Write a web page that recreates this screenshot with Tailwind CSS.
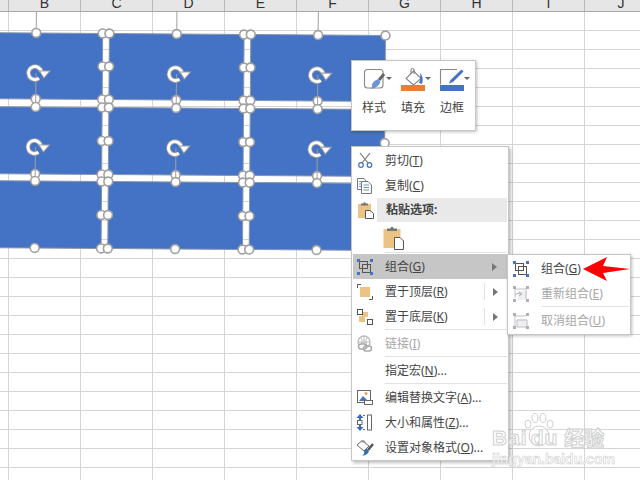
<!DOCTYPE html>
<html lang="zh">
<head>
  <meta charset="UTF-8">
  <title>组合</title>
  <script src="https://cdn.jsdelivr.net/npm/@tailwindcss/browser@4"></script>
</head>
<body class="bg-white">
  <div class="relative w-[640px] h-[480px] overflow-hidden font-['Noto_Sans','Noto_Sans_CJK_SC',sans-serif] text-[12px] text-[#444]">

    <!-- column header -->
    <div class="relative z-10 flex h-[12px] bg-[#e6e6e6] border-b border-[#a6a6a6] overflow-hidden font-['Liberation_Sans',sans-serif] text-[14px] leading-[12px] text-[#333]">
      <div class="w-[9px] shrink-0 border-r border-[#b8b8b8]"></div>
      <div class="w-[72px] shrink-0 border-r border-[#b8b8b8] text-center -mt-[3px]">B</div>
      <div class="w-[72px] shrink-0 border-r border-[#b8b8b8] text-center -mt-[3px]">C</div>
      <div class="w-[72px] shrink-0 border-r border-[#b8b8b8] text-center -mt-[3px]">D</div>
      <div class="w-[72px] shrink-0 border-r border-[#b8b8b8] text-center -mt-[3px]">E</div>
      <div class="w-[72px] shrink-0 border-r border-[#b8b8b8] text-center -mt-[3px]">F</div>
      <div class="w-[72px] shrink-0 border-r border-[#b8b8b8] text-center -mt-[3px]">G</div>
      <div class="w-[72px] shrink-0 border-r border-[#b8b8b8] text-center -mt-[3px]">H</div>
      <div class="w-[72px] shrink-0 border-r border-[#b8b8b8] text-center -mt-[3px]">I</div>
      <div class="w-[72px] shrink-0 text-center -mt-[3px]">J</div>
    </div>

    <!-- cells -->
    <div class="h-[468px] [background-image:linear-gradient(#d4d4d4_1px,transparent_1px),linear-gradient(90deg,#d4d4d4_1px,transparent_1px)] [background-size:72px_19px] [background-position:8px_18px]"></div>

    <!-- selected shapes -->
    <svg id="shapes" class="absolute left-0 top-0" width="640" height="480" viewBox="0 0 640 480"></svg>

    <!-- mini toolbar -->
    <div class="absolute left-[351px] top-[60px] w-[125px] h-[71px] bg-white border border-[#c6c6c6] shadow-[1px_1px_3px_rgba(0,0,0,0.25)] flex px-[3px] pt-[7px]">
      <div class="w-[39px] flex flex-col items-center">
        <svg width="39" height="24" viewBox="0 0 39 24">
          <rect x="9.5" y="1.5" width="18.5" height="18.5" rx="3" fill="#fff" stroke="#888" stroke-width="1.1"/>
          <path d="M29 6 L24 12" stroke="#666" stroke-width="3"/>
          <path d="M23 11 L25.500 14 Q23 20 15 21 Q18 19 17 16 Q19 12.500 23 11Z" fill="#6b93d6"/>
          <path d="M31 9h6l-3 3z" fill="#666"/>
        </svg>
        <div class="mt-[8px] leading-[16px] -ml-px">样式</div>
      </div>
      <div class="w-[39px] flex flex-col items-center">
        <svg width="39" height="24" viewBox="0 0 39 24">
          <path d="M19.5 3 L27 10.5 L19.5 17 L12 10.5Z" fill="#fff" stroke="#888" stroke-width="1.1"/>
          <path d="M17 6 V2 a1.5 1.5 0 0 1 3 0 V6" fill="none" stroke="#777"/>
          <path d="M26 5 Q30 9 28 16 L25 15 Q27 11 26 5Z" fill="#4472c4"/>
          <rect x="7" y="17" width="24" height="6" fill="#ed7d31"/>
          <path d="M31 9h6l-3 3z" fill="#666"/>
        </svg>
        <div class="mt-[8px] leading-[16px] -ml-px">填充</div>
      </div>
      <div class="w-[39px] flex flex-col items-center">
        <svg width="39" height="24" viewBox="0 0 39 24">
          <path d="M24 1.5 H7.5 V16.5" fill="none" stroke="#888" stroke-width="1.1"/>
          <path d="M28.500 1.500 L30.500 3.500 L20 14 L16 15.500 L17.500 12Z" fill="#4472c4"/>
          <rect x="7" y="17" width="24" height="6" fill="#4472c4"/>
          <path d="M31 9h6l-3 3z" fill="#666"/>
        </svg>
        <div class="mt-[8px] leading-[16px] -ml-px">边框</div>
      </div>
    </div>

    <!-- context menu -->
    <div class="absolute left-[351px] top-[146px] w-[158px] bg-white border border-[#c6c6c6] shadow-[2px_2px_3px_rgba(0,0,0,0.25)] pt-px flex flex-col">
      <div class="flex items-center h-[25px]">
        <svg class="ml-[4px] mr-[11px] shrink-0" width="18" height="18" viewBox="0 0 18 18">
          <path d="M4 1 L12 11 M14 1 L6 11" stroke="#777" stroke-width="1.2" fill="none"/>
          <circle cx="5" cy="13" r="2.3" fill="none" stroke="#4472c4" stroke-width="1.2"/>
          <circle cx="13.5" cy="13" r="2.3" fill="none" stroke="#4472c4" stroke-width="1.2"/>
        </svg>
        <span>剪切(<span class="underline">T</span>)</span>
      </div>
      <div class="flex items-center h-[25px]">
        <svg class="ml-[4px] mr-[11px] shrink-0" width="18" height="18" viewBox="0 0 18 18">
          <path d="M5.500 12.500 H1.500 V1.500 H8 L10 4" fill="#fff" stroke="#777"/>
          <path d="M5.500 4.500 H12 L15.500 8 V16.500 H5.500Z" fill="#fff" stroke="#777"/>
          <path d="M3 4.500H5M3 7H5M3 9.500H5M7.500 8H13M7.500 10.500H13M7.500 13H13" stroke="#6b93d6"/>
        </svg>
        <span>复制(<span class="underline">C</span>)</span>
      </div>
      <div class="flex h-[24px]">
        <div class="w-[25px] shrink-0 flex items-center">
          <svg class="ml-[5px]" width="18" height="18" viewBox="0 0 18 18">
            <rect x="1" y="3" width="13" height="14" fill="#ebc385"/>
            <path d="M4 4.500 V2.500 H6 Q7.500 0 9 2.500 H11 V4.500Z" fill="#777"/>
            <path d="M8.500 9.500 H13 L16.500 12.500 V17.500 H8.500Z" fill="#fff" stroke="#555"/>
          </svg>
        </div>
        <div class="flex-1 mr-px bg-[#e9e9e9] pl-[9px] font-bold leading-[24px]">粘贴选项:</div>
      </div>
      <div class="flex h-[30px] items-start pt-[4px] pl-[31px]">
        <svg width="22" height="24" viewBox="0 0 22 24">
          <rect x="0.500" y="3" width="17" height="19" fill="#ebc385"/>
          <path d="M4 5 V2.500 H7 Q9 -1 11 2.500 H14 V5Z" fill="#777"/>
          <path d="M11.500 11.500 H17 L20.500 15 V23.500 H11.500Z" fill="#fff" stroke="#555"/>
        </svg>
      </div>
      <div class="h-[2px] ml-[33px] mr-px bg-[#e3e3e3] [background-clip:content-box] pb-px"></div>
      <div class="flex items-center h-[25px] ml-px mr-px bg-[#c6c6c6]">
        <svg class="ml-[3px] mr-[11px] shrink-0" width="18" height="18" viewBox="0 0 18 18">
          <rect x="3.500" y="3.500" width="8" height="7" fill="none" stroke="#555"/>
          <rect x="6.500" y="6.500" width="8" height="8" fill="none" stroke="#555"/>
          <path d="M1 1h3v3h-3zM14 1h3v3h-3zM1 14h3v3h-3zM14 14h3v3h-3z" fill="#4472c4"/>
        </svg>
        <span>组合(<span class="underline">G</span>)</span>
        <span class="ml-auto mr-[10px] w-0 h-0 border-y-[4px] border-y-transparent border-l-[5px] border-l-[#777]"></span>
      </div>
      <div class="flex items-center h-[25px]">
        <svg class="ml-[4px] mr-[11px] shrink-0" width="18" height="18" viewBox="0 0 18 18">
          <rect x="4" y="4" width="10" height="10" fill="#ebc385"/>
          <path d="M5 1.500H1.500V5M13 16.500H16.500V13" fill="none" stroke="#555"/>
        </svg>
        <span>置于顶层(<span class="underline">R</span>)</span>
        <span class="ml-auto h-[17px] border-l border-[#e3e3e3]"></span>
        <span class="ml-[8px] mr-[10px] w-0 h-0 border-y-[4px] border-y-transparent border-l-[5px] border-l-[#777]"></span>
      </div>
      <div class="flex items-center h-[25px]">
        <svg class="ml-[4px] mr-[11px] shrink-0" width="18" height="18" viewBox="0 0 18 18">
          <rect x="6" y="4" width="6" height="5" fill="#ebc385"/>
          <rect x="3" y="8" width="6" height="6" fill="#ebc385"/>
          <rect x="1.500" y="1.500" width="5" height="5" fill="#fff" stroke="#555"/>
          <rect x="11.500" y="11.500" width="5" height="5" fill="#fff" stroke="#555"/>
        </svg>
        <span>置于底层(<span class="underline">K</span>)</span>
        <span class="ml-auto h-[17px] border-l border-[#e3e3e3]"></span>
        <span class="ml-[8px] mr-[10px] w-0 h-0 border-y-[4px] border-y-transparent border-l-[5px] border-l-[#777]"></span>
      </div>
      <div class="h-[2px] ml-[33px] mr-px bg-[#e3e3e3] [background-clip:content-box] pb-px"></div>
      <div class="flex items-center h-[25px] text-[#a6a6a6]">
        <svg class="ml-[4px] mr-[11px] shrink-0" width="18" height="18" viewBox="0 0 18 18">
          <circle cx="8" cy="7" r="6" fill="none" stroke="#bbb" stroke-width="1.300"/>
          <path d="M2 7H14M8 1V13M4.500 2.500Q8 6 4.500 11.500M11.500 2.500Q8 6 11.500 11.500" fill="none" stroke="#bbb"/>
          <rect x="2.500" y="9" width="8" height="5" rx="2.500" fill="#fff" stroke="#aaa" stroke-width="1.500"/>
          <rect x="7.500" y="11" width="8" height="5" rx="2.500" fill="none" stroke="#aaa" stroke-width="1.500"/>
        </svg>
        <span>链接(<span class="underline">I</span>)</span>
      </div>
      <div class="h-[2px] ml-[33px] mr-px bg-[#e3e3e3] [background-clip:content-box] pb-px"></div>
      <div class="flex items-center h-[25px] pl-[33px]">
        <span>指定宏(<span class="underline">N</span>)...</span>
      </div>
      <div class="h-[2px] ml-[33px] mr-px bg-[#e3e3e3] [background-clip:content-box] pb-px"></div>
      <div class="flex items-center h-[25px]">
        <svg class="ml-[4px] mr-[11px] shrink-0" width="18" height="18" viewBox="0 0 18 18">
          <rect x="1.500" y="1.500" width="13" height="12" fill="#fff" stroke="#666"/>
          <path d="M3 12 L7 7 L10 10 L12 12Z" fill="#4472c4"/>
          <circle cx="10" cy="4.500" r="1.500" fill="#ed9d5d"/>
          <rect x="8.500" y="11.500" width="8" height="4" fill="#fff" stroke="#666"/>
        </svg>
        <span>编辑替换文字(<span class="underline">A</span>)...</span>
      </div>
      <div class="flex items-center h-[25px]">
        <svg class="ml-[4px] mr-[11px] shrink-0" width="18" height="18" viewBox="0 0 18 18">
          <path d="M4 0 L7.500 4H5V6H3V4H0.500Z" fill="#2f6db5"/>
          <path d="M4 17 L7.500 13H5V11H3V13H0.500Z" fill="#2f6db5"/>
          <rect x="1.500" y="6.500" width="4.500" height="4" fill="none" stroke="#666"/>
          <path d="M7 1.500H9M7 15.500H9" stroke="#666"/>
          <rect x="11.500" y="1" width="4" height="15" fill="#fff" stroke="#666"/>
        </svg>
        <span>大小和属性(<span class="underline">Z</span>)...</span>
      </div>
      <div class="flex items-center h-[25px]">
        <svg class="ml-[4px] mr-[11px] shrink-0" width="18" height="18" viewBox="0 0 18 18">
          <path d="M1 6 L6 1.500 L13 7 L8 12Z" fill="#fff" stroke="#666"/>
          <path d="M4 3 L8 1 L10 4" fill="#999"/>
          <path d="M17 5 L12 11" stroke="#555" stroke-width="2.500"/>
          <path d="M10.500 9.500 L13 12 Q12 16 6 17 Q9 15 8 12 Q9 10 10.500 9.500Z" fill="#2f6db5"/>
        </svg>
        <span>设置对象格式(<span class="underline">O</span>)...</span>
      </div>
    </div>

    <!-- group submenu -->
    <div class="absolute left-[507px] top-[254px] w-[124px] h-[81px] bg-white border border-[#c6c6c6] shadow-[1px_1px_3px_rgba(0,0,0,0.25)] pt-px flex flex-col">
      <div class="flex items-center h-[25px]">
        <svg class="ml-[4px] mr-[11px] shrink-0" width="18" height="18" viewBox="0 0 18 18">
          <rect x="3.500" y="3.500" width="8" height="7" fill="none" stroke="#555"/>
          <rect x="6.500" y="6.500" width="8" height="8" fill="none" stroke="#555"/>
          <path d="M1 1h3v3h-3zM14 1h3v3h-3zM1 14h3v3h-3zM14 14h3v3h-3z" fill="#4472c4"/>
        </svg>
        <span>组合(<span class="underline">G</span>)</span>
      </div>
      <div class="flex items-center h-[25px] text-[#a6a6a6]">
        <svg class="ml-[4px] mr-[11px] shrink-0" width="18" height="18" viewBox="0 0 18 18">
          <rect x="6" y="6" width="9" height="9" fill="#f1eef3"/>
          <path d="M3 4 H14 V14 M3 4 V13" fill="none" stroke="#c0c0c0"/>
          <path d="M3 10 Q6 7 9 9 M7 7 L10 9 L7 11" fill="none" stroke="#b0b0b0"/>
          <path d="M1 1h3v3h-3zM14 1h3v3h-3zM1 14h3v3h-3zM14 14h3v3h-3z" fill="#b0b0b0"/>
        </svg>
        <span>重新组合(<span class="underline">E</span>)</span>
      </div>
      <div class="h-[2px] ml-[33px] mr-px bg-[#e3e3e3] [background-clip:content-box] pb-px"></div>
      <div class="flex items-center h-[25px] text-[#a6a6a6]">
        <svg class="ml-[4px] mr-[11px] shrink-0" width="18" height="18" viewBox="0 0 18 18">
          <rect x="5" y="7" width="10" height="8" fill="#f1eef3"/>
          <path d="M3 4 H14 M3 4 V14 M5 8 H15 V15 H5Z" fill="none" stroke="#c0c0c0"/>
          <path d="M1 1h3v3h-3zM14 1h3v3h-3zM1 14h3v3h-3zM14 14h3v3h-3z" fill="#b0b0b0"/>
        </svg>
        <span>取消组合(<span class="underline">U</span>)</span>
      </div>
    </div>

    <!-- red arrow -->
    <svg class="absolute left-[580px] top-[254px]" width="54" height="30" viewBox="0 0 54 30">
      <path d="M3 15 L27 3 L23 12 L50 15 L23 19 L27 27Z" fill="#f00"/>
    </svg>

    <!-- watermark -->
    <div class="absolute left-[490px] top-[412px] w-[120px] h-[56px] font-['Liberation_Sans',sans-serif] text-white/70 [-webkit-text-stroke:1px_#d0d0d0]">
      <svg class="absolute left-[31px] top-[0px]" width="36" height="36" viewBox="0 0 36 36">
        <g fill="#fff" fill-opacity="0.6" stroke="#d0d0d0">
          <ellipse cx="7" cy="12" rx="3" ry="4"/>
          <ellipse cx="14" cy="6" rx="3" ry="4.500"/>
          <ellipse cx="22" cy="6" rx="3" ry="4.500"/>
          <ellipse cx="29" cy="12" rx="3" ry="4"/>
          <circle cx="18" cy="24" r="10"/>
        </g>
      </svg>
      <div class="absolute left-[2px] top-[14px] flex items-center h-[24px] font-bold text-[21px] leading-[24px] tracking-[1px]">
        <span>Bai</span><span class="ml-[3px]">du</span><span class="ml-[6px] font-['Noto_Sans_CJK_SC',sans-serif] text-[20px] tracking-[0px]">经验</span>
      </div>
      <div class="absolute left-[2px] top-[39px] font-bold text-[14px] leading-[16px] [-webkit-text-stroke:0.6px_#d0d0d0]">jingyan.baidu.com</div>
    </div>
  </div>

  <script>
    // 3 x 3 shapes, slightly rotated as a group
    const cols = [[-31, 101.9], [108.6, 243.3], [250, 384.7]];
    const rows = [[34, 100], [108, 175], [182, 249]];
    const gray = '#a0a0a0';
    let out = '<g transform="rotate(0.43 177 140)">';
    rows.forEach(r => cols.forEach(c => {
      out += `<rect x="${c[0]}" y="${r[0]}" width="${c[1] - c[0]}" height="${r[1] - r[0]}" fill="#4472c4" stroke="#8795ad"/>`;
    }));
    const dot = (x, y) => `<circle cx="${x}" cy="${y}" r="4.400" fill="#fff" stroke="${gray}" stroke-width="1.600"/>`;
    const arrow = (x, y) => `M${x + 4} ${y + 5.200} A6.500 6.500 0 1 1 ${x + 6.400} ${y - 1}`;
    const rotate = (x, y) => `
      <path d="${arrow(x, y)}" fill="none" stroke="${gray}" stroke-width="4.600"/>
      <path d="${arrow(x, y)}" fill="none" stroke="#fff" stroke-width="2.800"/>
      <path d="M${x + 4.500} ${y - 2}H${x + 15}L${x + 9} ${y + 5}Z" fill="#fff" stroke="${gray}"/>`;
    rows.forEach((r, ri) => cols.forEach((c, ci) => {
      const mx = (c[0] + c[1]) / 2, my = (r[0] + r[1]) / 2;
      out += `<path d="M${mx} ${r[0] - 34}V${r[0]}" stroke="${gray}"/>`;
      if (ri > 0) out += rotate(mx - 1, r[0] - 34);
      [[mx, r[0]], [c[1], r[0]], [c[1], my], [c[1], r[1]], [mx, r[1]], [c[0], r[1]], [c[0], my], [c[0], r[0]]]
        .forEach(p => { out += dot(p[0], p[1]); });
    }));
    document.getElementById('shapes').innerHTML = out + '</g>';
  </script>
</body>
</html>
